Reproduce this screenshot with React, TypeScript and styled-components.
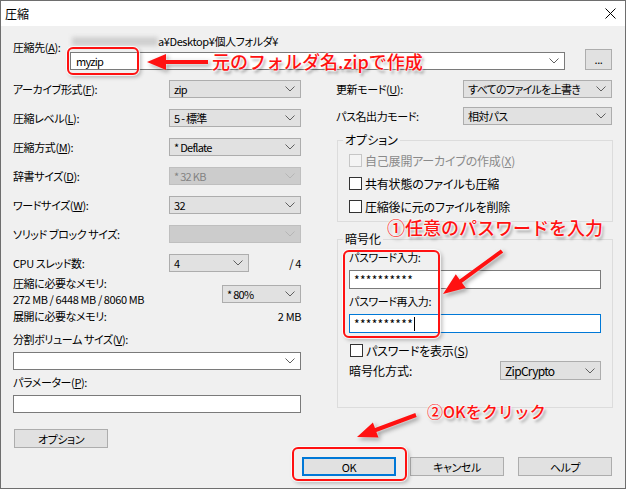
import React from "react";
import styled, { createGlobalStyle } from "styled-components";

const GlobalStyle = createGlobalStyle`
  html, body { margin: 0; padding: 0; background: #fff; }
  body {
    font-family: "Noto Sans CJK JP", "Noto Sans", sans-serif;
    font-size: 11px;
    color: #000;
  }
  * { box-sizing: border-box; }
`;

const Window = styled.div`
  position: relative;
  width: 626px;
  height: 489px;
  border: 1px solid #6e6e6e;
  background: #f0f0f0;
  display: flex;
  flex-direction: column;
  overflow: hidden;
  font-feature-settings: "palt";
  letter-spacing: -0.4px;
  line-height: 14px;
`;

const TitleBar = styled.div`
  height: 25px;
  flex-shrink: 0;
  background: #fff;
  display: flex;
  align-items: center;
  justify-content: space-between;
  padding: 0 9px 0 4px;
`;

const Title = styled.span`
  font-size: 12px;
  letter-spacing: 0;
`;

const Body = styled.div`
  flex: 1;
  padding: 9px 12px 0 12px;
  display: flex;
  flex-direction: column;
`;

const DestRow = styled.div`
  display: flex;
  align-items: flex-end;
`;

const DestLabel = styled.div`
  width: 57px;
  align-self: flex-start;
  padding-top: 5px;
  white-space: nowrap;
`;

const DestMain = styled.div`
  flex: 1;
  display: flex;
  flex-direction: column;
`;

const PathLine = styled.div`
  height: 12px;
  line-height: 12px;
  display: flex;
  align-items: center;
  white-space: nowrap;
`;

const Redacted = styled.span`
  width: 86px;
  height: 9px;
  margin-left: 2px;
  background: #cfcfcf;
  filter: blur(2px);
`;

type Variant = "normal" | "disabled" | "edit";

const Combo = styled.div<{ $variant?: Variant; $w?: number; $h?: number }>`
  display: flex;
  align-items: center;
  justify-content: space-between;
  height: ${(p) => p.$h ?? 18}px;
  width: ${(p) => (p.$w ? `${p.$w}px` : "auto")};
  padding: 0 5px 0 ${(p) => (p.$variant === "edit" ? 5 : 4)}px;
  border: 1px solid
    ${(p) =>
      p.$variant === "disabled" ? "#bfbfbf" : p.$variant === "edit" ? "#7a7a7a" : "#adadad"};
  background: ${(p) =>
    p.$variant === "disabled" ? "#cccccc" : p.$variant === "edit" ? "#ffffff" : "#e1e1e1"};
  color: ${(p) => (p.$variant === "disabled" ? "#838383" : "#000")};
  white-space: nowrap;
  flex-shrink: 0;
  letter-spacing: -0.7px;
`;

const TextBox = styled.div<{ $focused?: boolean; $h?: number }>`
  height: ${(p) => p.$h ?? 18}px;
  border: 1px solid ${(p) => (p.$focused ? "#0078d7" : "#7a7a7a")};
  background: #fff;
  display: flex;
  align-items: center;
  padding: 0 4px;
  white-space: nowrap;
  font-size: 12px;
  letter-spacing: 0.3px;
`;

const Caret = styled.span`
  display: inline-block;
  width: 1px;
  height: 14px;
  background: #000;
  margin-left: 1px;
`;

const Button = styled.div<{ $default?: boolean; $w?: number; $h?: number }>`
  width: ${(p) => p.$w ?? 94}px;
  height: ${(p) => p.$h ?? 19}px;
  background: #e1e1e1;
  border: ${(p) => (p.$default ? "2px solid #0078d7" : "1px solid #adadad")};
  display: flex;
  align-items: center;
  justify-content: center;
  flex-shrink: 0;
`;

const BrowseButton = styled(Button)`
  margin-left: 20px;
  margin-right: 1px;
  align-items: flex-start;
  padding-top: 2px;
`;

const Columns = styled.div`
  display: flex;
  align-items: flex-start;
  gap: 35px;
  margin-top: 10px;
`;

const LeftCol = styled.div`
  width: 288px;
  display: flex;
  flex-direction: column;
`;

const RightCol = styled.div`
  flex: 1;
  display: flex;
  flex-direction: column;
`;

const SettingsList = styled.div`
  display: flex;
  flex-direction: column;
  gap: 11px;
`;

const SettingRow = styled.div<{ $labelW?: number }>`
  display: grid;
  grid-template-columns: ${(p) => p.$labelW ?? 156}px 1fr;
  align-items: center;
  white-space: nowrap;
`;

const CpuRow = styled.div`
  display: grid;
  grid-template-columns: 156px 80px 1fr;
  align-items: center;
  white-space: nowrap;
`;

const RightText = styled.span`
  text-align: right;
`;

const MemoryBlock = styled.div`
  margin-top: 3px;
  display: grid;
  grid-template-columns: 1fr 79px;
  grid-template-rows: 16px 16px;
  white-space: nowrap;
`;

const MemLine = styled.div`
  height: 16px;
  line-height: 16px;
`;

const MemoryCombo = styled(Combo)`
  grid-column: 2;
  grid-row: 1 / span 2;
  align-self: end;
  margin-bottom: 4px;
`;

const SpreadRow = styled.div<{ $mt?: number }>`
  display: flex;
  justify-content: space-between;
  margin-top: ${(p) => p.$mt ?? 0}px;
  white-space: nowrap;
`;

const Label = styled.div<{ $mt?: number }>`
  margin-top: ${(p) => p.$mt ?? 0}px;
  white-space: nowrap;
`;

const Spaced = styled.div<{ $mt: number }>`
  margin-top: ${(p) => p.$mt}px;
`;

const OptionButton = styled(Button)`
  margin-top: 16px;
  margin-left: 1px;
`;

const RightSetting = styled.div<{ $mt?: number }>`
  display: grid;
  grid-template-columns: 127px 149px;
  align-items: center;
  margin-top: ${(p) => p.$mt ?? 0}px;
  white-space: nowrap;
`;

const Group = styled.fieldset<{ $mt: number; $pt: number; $pb: number; $gap: number }>`
  margin: ${(p) => p.$mt}px 0 0 1px;
  padding: ${(p) => p.$pt}px 11px ${(p) => p.$pb}px 11px;
  border: 1px solid #dcdcdc;
  min-width: 0;
  display: flex;
  flex-direction: column;
  gap: ${(p) => p.$gap}px;
`;

const Legend = styled.legend`
  padding: 0 2px;
  margin-left: -6px;
  line-height: 14px;
  font-size: 12px;
  letter-spacing: 0;
`;

const CheckRow = styled.div<{ $disabled?: boolean; $ml?: number }>`
  display: flex;
  align-items: center;
  gap: 3px;
  height: 13px;
  margin-left: ${(p) => p.$ml ?? 0}px;
  font-size: 12px;
  letter-spacing: -0.2px;
  color: ${(p) => (p.$disabled ? "#8a8a8a" : "#000")};
  white-space: nowrap;
`;

const CheckBox = styled.span<{ $disabled?: boolean }>`
  width: 13px;
  height: 13px;
  flex-shrink: 0;
  border: 1px solid ${(p) => (p.$disabled ? "#c6c6c6" : "#333333")};
  background: ${(p) => (p.$disabled ? "#f4f4f4" : "#fff")};
`;

const PwBlock = styled.div`
  display: flex;
  flex-direction: column;
`;

const MethodRow = styled.div`
  display: flex;
  align-items: center;
  justify-content: space-between;
  margin-top: 4px;
  white-space: nowrap;
  font-size: 12px;
  letter-spacing: 0;
`;

const ButtonRow = styled.div`
  display: flex;
  justify-content: flex-end;
  gap: 14px;
  margin-top: 9px;
  padding-right: 1px;
`;

/* ---------- annotations (drawn over the dialog) ---------- */

const Overlay = styled.div`
  position: absolute;
  inset: -1px;
  pointer-events: none;
`;

const RedBox = styled.div<{ $x: number; $y: number; $w: number; $h: number }>`
  position: absolute;
  left: ${(p) => p.$x}px;
  top: ${(p) => p.$y}px;
  width: ${(p) => p.$w}px;
  height: ${(p) => p.$h}px;
  border: 2px solid #ff1111;
  border-radius: 6px;
  box-shadow: 0 0 1px 1px rgba(255, 255, 255, 0.9), 2px 2px 4px rgba(0, 0, 0, 0.3),
    inset 0 0 1px rgba(255, 255, 255, 0.9);
`;

const RedText = styled.span<{ $x: number; $y: number; $size: number }>`
  position: absolute;
  left: ${(p) => p.$x}px;
  top: ${(p) => p.$y}px;
  font-size: ${(p) => p.$size}px;
  line-height: 1;
  font-weight: 500;
  color: #ff1111;
  white-space: nowrap;
  letter-spacing: 0;
  font-feature-settings: normal;
  text-shadow: 0 0 2px #fff, 0 0 2px #fff, 0 0 3px #fff, 2px 3px 3px rgba(0, 0, 0, 0.35);
`;

const ArrowSvg = styled.svg`
  position: absolute;
  left: 0;
  top: 0;
  overflow: visible;
  filter: drop-shadow(0 0 1px #fff) drop-shadow(2px 2px 2px rgba(0, 0, 0, 0.35));
`;

function arrowPoints(
  x1: number,
  y1: number,
  x2: number,
  y2: number,
  t: number,
  hl: number,
  hw: number
): string {
  const dx = x2 - x1;
  const dy = y2 - y1;
  const len = Math.hypot(dx, dy);
  const ux = dx / len;
  const uy = dy / len;
  const nx = -uy;
  const ny = ux;
  const bx = x2 - ux * hl;
  const by = y2 - uy * hl;
  const pts: [number, number][] = [
    [x1 + (nx * t) / 2, y1 + (ny * t) / 2],
    [bx + (nx * t) / 2, by + (ny * t) / 2],
    [bx + (nx * hw) / 2, by + (ny * hw) / 2],
    [x2, y2],
    [bx - (nx * hw) / 2, by - (ny * hw) / 2],
    [bx - (nx * t) / 2, by - (ny * t) / 2],
    [x1 - (nx * t) / 2, y1 - (ny * t) / 2],
  ];
  return pts.map((p) => `${p[0].toFixed(1)},${p[1].toFixed(1)}`).join(" ");
}

const Chevron: React.FC<{ disabled?: boolean }> = ({ disabled }) => (
  <svg width="10" height="6" viewBox="0 0 10 6">
    <path
      d="M0.5 0.5 L5 5 L9.5 0.5"
      fill="none"
      stroke={disabled ? "#b5b5b5" : "#5f5f5f"}
      strokeWidth="1"
    />
  </svg>
);

const CloseIcon = () => (
  <svg width="11" height="11" viewBox="0 0 11 11">
    <path d="M0.5 0.5 L10.5 10.5 M10.5 0.5 L0.5 10.5" stroke="#000" strokeWidth="1" />
  </svg>
);

type SettingDef = { label: React.ReactNode; value: string; disabled?: boolean };

const settings: SettingDef[] = [
  { label: <>アーカイブ形式(<u>F</u>):</>, value: "zip" },
  { label: <>圧縮レベル(<u>L</u>):</>, value: "5 - 標準" },
  { label: <>圧縮方式(<u>M</u>):</>, value: "* Deflate" },
  { label: <>辞書サイズ(<u>D</u>):</>, value: "* 32 KB", disabled: true },
  { label: <>ワードサイズ(<u>W</u>):</>, value: "32" },
  { label: "ソリッド ブロック サイズ:", value: "", disabled: true },
];

export default function App() {
  return (
    <>
      <GlobalStyle />
      <Window>
        <TitleBar>
          <Title>圧縮</Title>
          <CloseIcon />
        </TitleBar>
        <Body>
          <DestRow>
            <DestLabel>
              圧縮先(<u>A</u>):
            </DestLabel>
            <DestMain>
              <PathLine>
                <Redacted />
                <span>a¥Desktop¥個人フォルダ¥</span>
              </PathLine>
              <Spaced $mt={5}>
                <Combo $variant="edit">
                  <span>myzip</span>
                  <Chevron />
                </Combo>
              </Spaced>
            </DestMain>
            <BrowseButton $w={27} $h={21}>
              ...
            </BrowseButton>
          </DestRow>

          <Columns>
            <LeftCol>
              <SettingsList>
                {settings.map((s, i) => (
                  <SettingRow key={i}>
                    <span>{s.label}</span>
                    <Combo $variant={s.disabled ? "disabled" : "normal"}>
                      <span>{s.value}</span>
                      <Chevron disabled={s.disabled} />
                    </Combo>
                  </SettingRow>
                ))}
                <CpuRow>
                  <span>CPU スレッド数:</span>
                  <Combo>
                    <span>4</span>
                    <Chevron />
                  </Combo>
                  <RightText>/ 4</RightText>
                </CpuRow>
              </SettingsList>

              <MemoryBlock>
                <MemLine>圧縮に必要なメモリ:</MemLine>
                <MemLine>272 MB / 6448 MB / 8060 MB</MemLine>
                <MemoryCombo>
                  <span>* 80%</span>
                  <Chevron />
                </MemoryCombo>
              </MemoryBlock>

              <SpreadRow $mt={2}>
                <span>展開に必要なメモリ:</span>
                <span>2 MB</span>
              </SpreadRow>

              <Label $mt={9}>
                分割ボリューム サイズ(<u>V</u>):
              </Label>
              <Spaced $mt={6}>
                <Combo $variant="edit">
                  <span />
                  <Chevron />
                </Combo>
              </Spaced>

              <Label $mt={5}>
                パラメーター(<u>P</u>):
              </Label>
              <Spaced $mt={6}>
                <TextBox />
              </Spaced>

              <OptionButton $w={94} $h={19}>
                オプション
              </OptionButton>
            </LeftCol>

            <RightCol>
              <RightSetting>
                <span>
                  更新モード(<u>U</u>):
                </span>
                <Combo>
                  <span>すべてのファイルを上書き</span>
                  <Chevron />
                </Combo>
              </RightSetting>
              <RightSetting $mt={9}>
                <span>パス名出力モード:</span>
                <Combo>
                  <span>相対パス</span>
                  <Chevron />
                </Combo>
              </RightSetting>

              <Group $mt={8} $pt={7} $pb={8} $gap={10}>
                <Legend>オプション</Legend>
                <CheckRow $disabled>
                  <CheckBox $disabled />
                  <span>
                    自己展開アーカイブの作成(<u>X</u>)
                  </span>
                </CheckRow>
                <CheckRow>
                  <CheckBox />
                  <span>共有状態のファイルも圧縮</span>
                </CheckRow>
                <CheckRow>
                  <CheckBox />
                  <span>圧縮後に元のファイルを削除</span>
                </CheckRow>
              </Group>

              <Group $mt={10} $pt={4} $pb={27} $gap={0}>
                <Legend>暗号化</Legend>
                <PwBlock>
                  <span>パスワード入力:</span>
                  <Spaced $mt={6}>
                    <TextBox $h={19}>**********</TextBox>
                  </Spaced>
                  <Label $mt={5}>パスワード再入力:</Label>
                  <Spaced $mt={6}>
                    <TextBox $h={19} $focused>
                      **********
                      <Caret />
                    </TextBox>
                  </Spaced>
                </PwBlock>
                <Spaced $mt={11}>
                  <CheckRow $ml={1}>
                    <CheckBox />
                    <span>
                      パスワードを表示(<u>S</u>)
                    </span>
                  </CheckRow>
                </Spaced>
                <MethodRow>
                  <span>暗号化方式:</span>
                  <Combo $w={101} $h={19}>
                    <span>ZipCrypto</span>
                    <Chevron />
                  </Combo>
                </MethodRow>
              </Group>
            </RightCol>
          </Columns>

          <ButtonRow>
            <Button $default>OK</Button>
            <Button>キャンセル</Button>
            <Button>ヘルプ</Button>
          </ButtonRow>
        </Body>

        <Overlay>
          <RedBox $x={67} $y={47} $w={72} $h={28} />
          <RedBox $x={343} $y={250} $w={97} $h={88} />
          <RedBox $x={292} $y={447} $w={115} $h={34} />

          <ArrowSvg width="626" height="489" viewBox="0 0 626 489">
            <polygon points={arrowPoints(208, 62, 147, 62, 4, 19, 16)} fill="#ff1111" />
            <polygon points={arrowPoints(502, 251, 443, 294, 4, 22, 17)} fill="#ff1111" />
            <polygon points={arrowPoints(416, 415, 357, 437, 4, 20, 16)} fill="#ff1111" />
          </ArrowSvg>

          <RedText $x={212} $y={52} $size={18}>
            元のフォルダ名.zipで作成
          </RedText>
          <RedText $x={387} $y={218} $size={18}>
            ①任意のパスワードを入力
          </RedText>
          <RedText $x={427} $y={403} $size={16}>
            ②OKをクリック
          </RedText>
        </Overlay>
      </Window>
    </>
  );
}
